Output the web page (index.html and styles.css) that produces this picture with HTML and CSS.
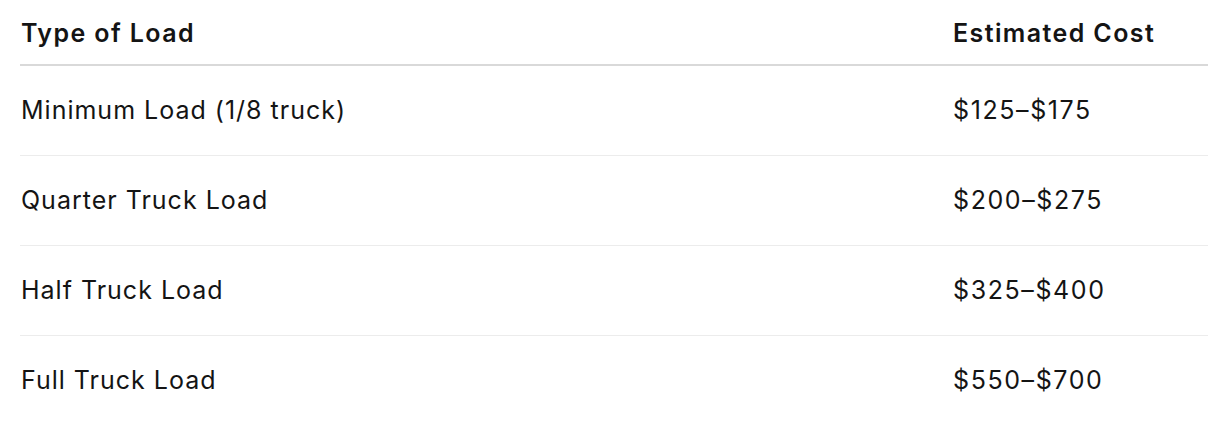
FILE: index.html
```html
<!DOCTYPE html>
<html>
<head>
<meta charset="utf-8">
<link rel="stylesheet" href="styles.css">
</head>
<body>
<table class="loads">
  <thead>
    <tr><th>Type of Load</th><th>Estimated Cost</th></tr>
  </thead>
  <tbody>
    <tr><td>Minimum Load (1/8 truck)</td><td class="cost">$125–$175</td></tr>
    <tr><td>Quarter Truck Load</td><td class="cost">$200–$275</td></tr>
    <tr><td>Half Truck Load</td><td class="cost">$325–$400</td></tr>
    <tr><td>Full Truck Load</td><td class="cost">$550–$700</td></tr>
  </tbody>
</table>
</body>
</html>
```
FILE: styles.css
```css
html, body {
  margin: 0;
  padding: 0;
  background: #fff;
}
body {
  padding-left: 20px;
  font-family: Inter, "Noto Sans", sans-serif;
  color: #141414;
}
.loads {
  width: 1188px;
  border-collapse: collapse;
  font-size: 25px;
  letter-spacing: 1px;
}
.loads th {
  text-align: left;
  font-weight: 600;
  letter-spacing: 1.4px;
  height: 62px;
  padding: 2px 0 0 1px;
  vertical-align: middle;
  border-bottom: 2px solid #d9d9d9;
  line-height: 1;
}
.loads td {
  height: 89px;
  padding: 0 0 0 1px;
  vertical-align: middle;
  border-bottom: 1px solid #ececec;
  line-height: 1;
}
.loads td.cost {
  letter-spacing: 1.6px;
}
.loads tbody tr:last-child td {
  border-bottom: none;
}
.loads th:first-child,
.loads td:first-child {
  width: 931px;
}
```
